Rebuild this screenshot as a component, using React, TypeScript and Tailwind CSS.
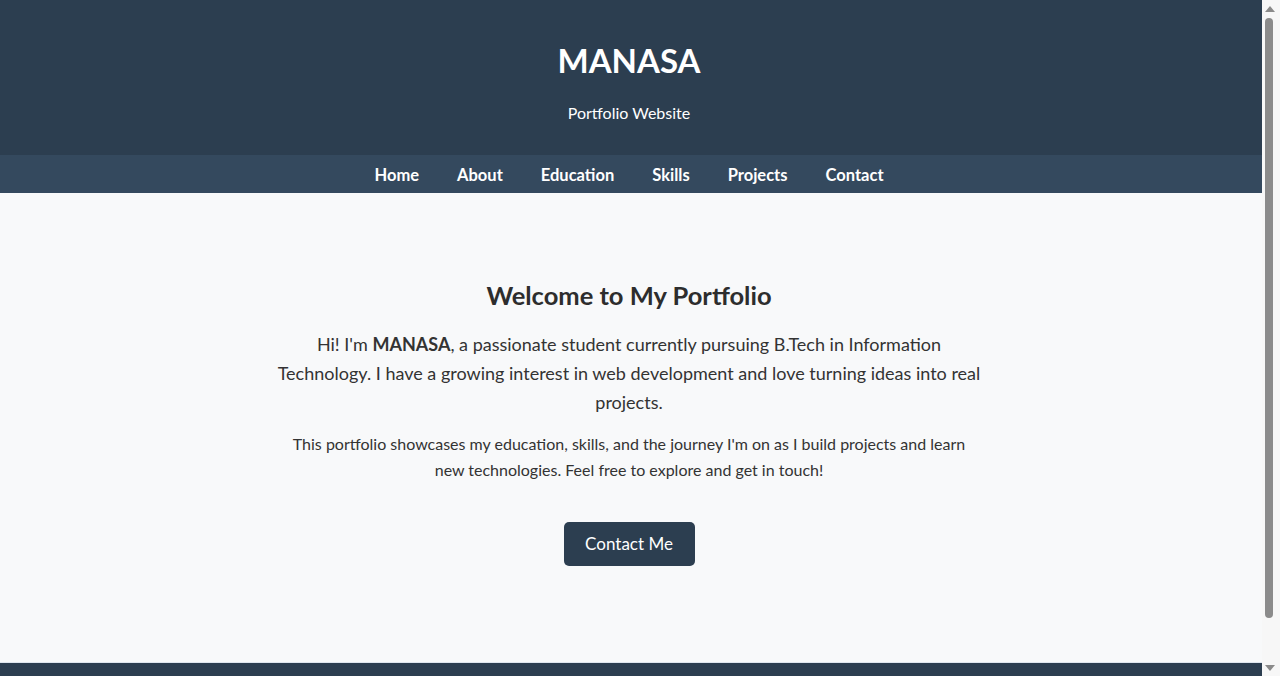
import React from 'react';

const links = ['Home', 'About', 'Education', 'Skills', 'Projects', 'Contact'];

// imitation of the browser scrollbar visible in the screenshot
const ScrollBar = () => (
  <div className="fixed top-0 right-0 w-[18px] h-screen bg-[#f7f7f7] flex flex-col items-start pl-[3px]">
    <div className="mt-[6px] w-0 h-0 border-x-[5px] border-x-transparent border-b-[6px] border-b-[#8a8a8a]" />
    <div className="mt-[6px] w-[8px] h-[600px] rounded-full bg-[#8b8b8b]" />
    <div className="mt-auto mb-[5px] w-0 h-0 border-x-[5px] border-x-transparent border-t-[6px] border-t-[#8a8a8a]" />
  </div>
);

const App = () => {
  return (
    <div className="min-h-screen bg-[#f8f9fa]">
      <div className="mr-[18px] bg-[#f8f9fa] text-[#333] font-['Lato','Noto_Sans',sans-serif]">
        {/* HEADER */}
        <header className="bg-[#2c3e50] text-white text-center pt-10 pb-[30px] pr-1">
          <h1 className="text-[33px] leading-[40px] font-bold">MANASA</h1>
          <p className="mt-[21px] text-[16px] leading-6">Portfolio Website</p>
        </header>

        {/* NAV */}
        <nav className="bg-[#34495e]">
          <ul className="flex justify-center gap-[38px] pt-2 pb-[6px] pr-1">
            {links.map((l) => (
              <li key={l}>
                <a href={`#${l.toLowerCase()}`} className="text-white font-bold text-[16.5px] leading-6">
                  {l}
                </a>
              </li>
            ))}
          </ul>
        </nav>

        {/* HOME */}
        <section id="home" className="pt-[86px] pb-[96px] pl-4 pr-5 text-center">
          <div className="max-w-[704px] mx-auto">
            <h2 className="text-[25.5px] leading-8 font-bold text-[#2d2d2d]">Welcome to My Portfolio</h2>
            <p className="mt-[19px] text-[18px] leading-[28.8px]">
              Hi! I'm <strong>MANASA</strong>, a passionate student currently pursuing B.Tech in Information
              Technology. I have a growing interest in web development and love turning ideas into real projects.
            </p>
            <p className="mt-[15px] text-[16px] leading-[25.6px]">
              This portfolio showcases my education, skills, and the journey I'm on as I build projects and learn
              new technologies. Feel free to explore and get in touch!
            </p>
            <button className="mt-[39px] w-[131px] h-[44px] rounded-[5px] bg-[#2c3e50] text-white text-[17px]">
              Contact Me
            </button>
          </div>
        </section>

        {/* FOOTER */}
        <footer className="bg-[#2c3e50] text-white text-center py-5 border-t border-[#dfe6ee]">
          <p className="text-[15px] leading-6">© 2025 MANASA. All rights reserved.</p>
        </footer>
      </div>
      <ScrollBar />
    </div>
  );
};

export default App;
